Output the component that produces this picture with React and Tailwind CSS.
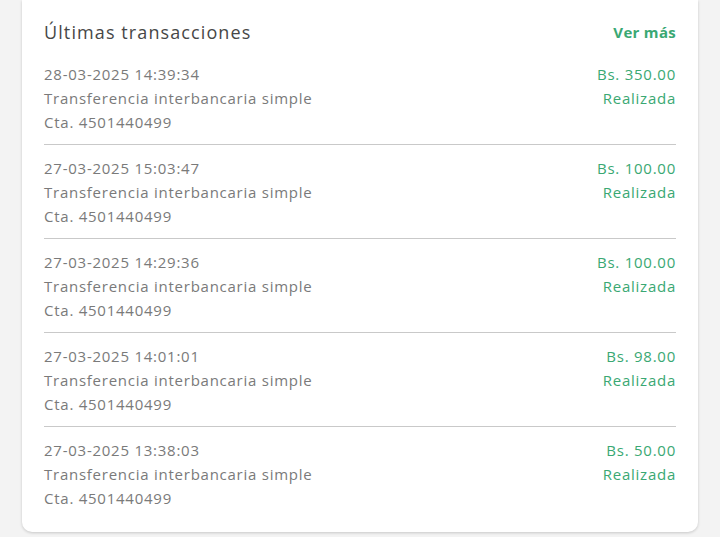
const rows = [
  { date: '28-03-2025 14:39:34', amount: 'Bs. 350.00' },
  { date: '27-03-2025 15:03:47', amount: 'Bs. 100.00' },
  { date: '27-03-2025 14:29:36', amount: 'Bs. 100.00' },
  { date: '27-03-2025 14:01:01', amount: 'Bs. 98.00' },
  { date: '27-03-2025 13:38:03', amount: 'Bs. 50.00' },
]

export default function App() {
  return (
    <div className="min-h-[537px] bg-[#f3f3f3] px-[22px] pb-[6px]" style={{ fontFamily: '"Open Sans", sans-serif' }}>
      <div className="bg-white rounded-b-[10px] shadow-[0_1px_3px_rgba(0,0,0,0.18)] px-[22px] pb-[12px]">
        {/* Header */}
        <div className="flex items-center justify-between h-[62px] pt-[2px]">
          <h2 className="text-[18px] text-[#474747] tracking-[1.1px]">Últimas transacciones</h2>
          <button className="text-[15px] font-bold text-[#3aa873] tracking-[0.3px]">Ver más</button>
        </div>

        {rows.map((r, i) => (
          <div
            key={i}
            className={`flex justify-between text-[15px] leading-[24px] tracking-[0.75px] ${
              i === 0 ? 'pb-[10px]' : 'pt-[11px] pb-[10px] border-t border-[#c9c9c9]'
            }`}
          >
            <div className="text-[#7a7a7a]">
              <div>{r.date}</div>
              <div>Transferencia interbancaria simple</div>
              <div>Cta. 4501440499</div>
            </div>
            <div className="text-right text-[#3aa873]">
              <div>{r.amount}</div>
              <div>Realizada</div>
            </div>
          </div>
        ))}
      </div>
    </div>
  )
}
